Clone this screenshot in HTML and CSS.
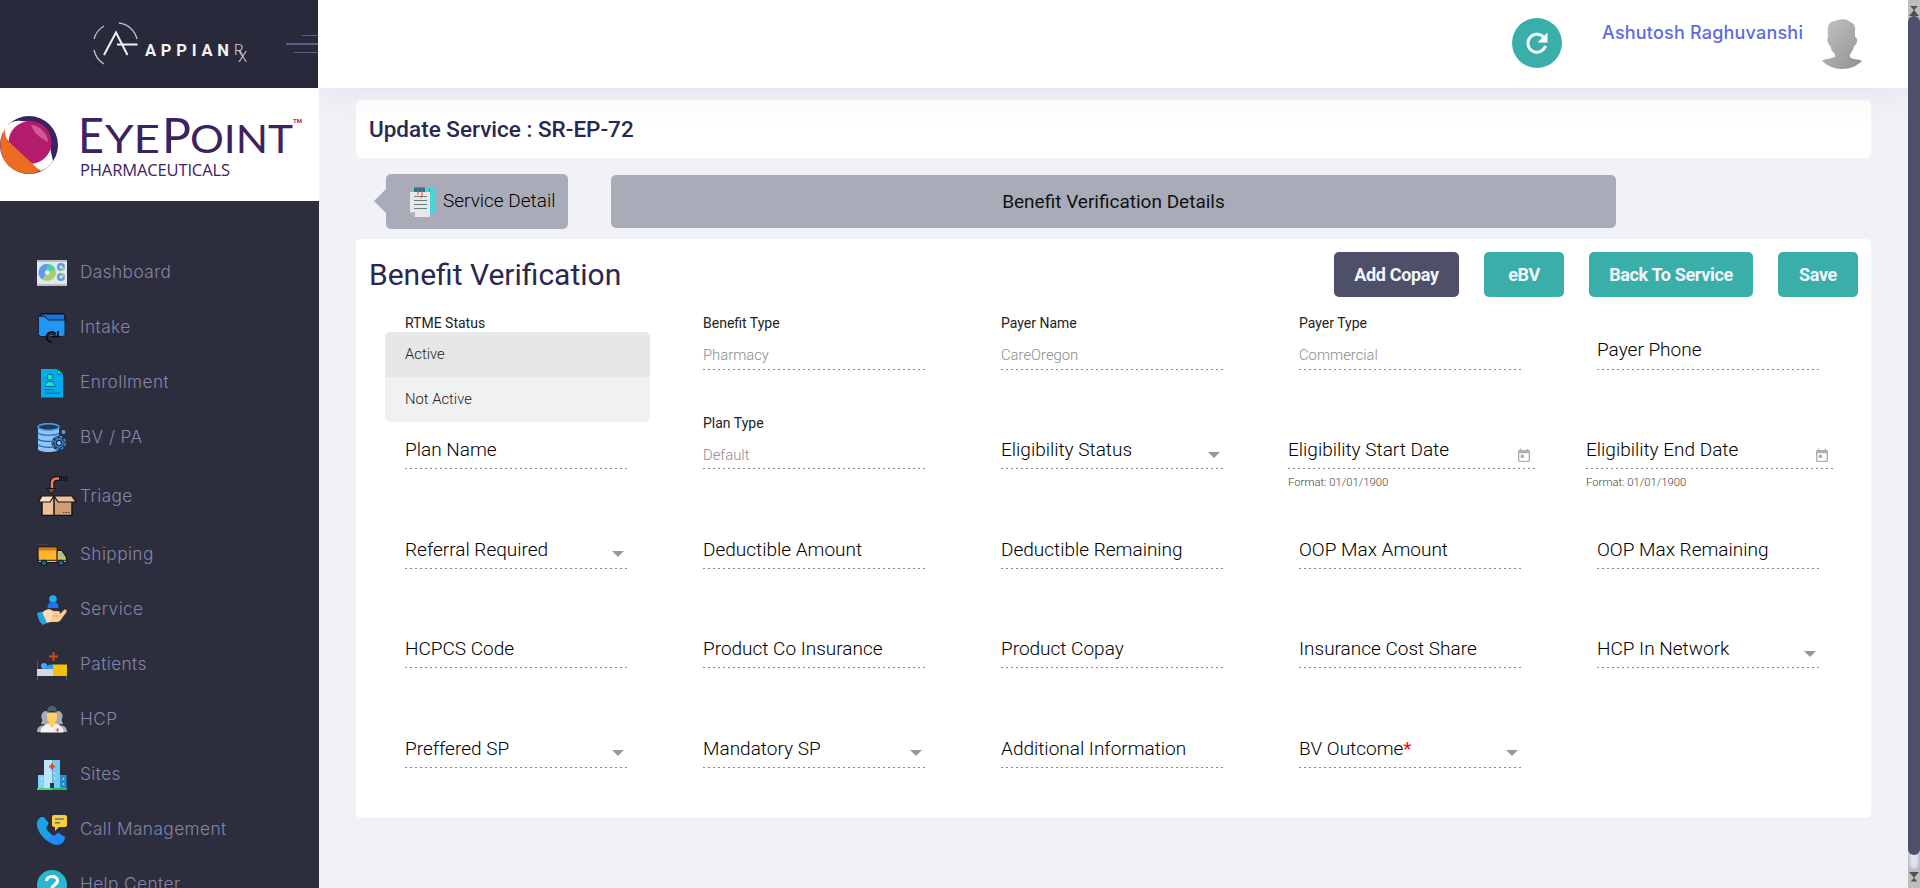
FILE: index.html
```
<!DOCTYPE html>
<html lang="en">
<head>
<meta charset="utf-8">
<title>Update Service</title>
<link rel="stylesheet" href="styles.css">
</head>
<body>
<div class="app">
  <aside class="sidebar">
    <div class="brand">
      <svg class="brand-logo" width="160" height="52" viewBox="0 0 160 52">
        <g fill="none" stroke="#f0f0f4">
          <path d="M2 19A22 22 0 0 1 12 6M27 3A21 21 0 0 1 45 19M2 30A22 22 0 0 0 12 44" stroke-width="1.3" opacity=".75"/>
          <path d="M12 35L24 12.500L35.500 35" stroke-width="2"/>
          <path d="M25 24.500H45.500" stroke-width="2"/>
        </g>
        <text x="53" y="35.500" class="appian" textLength="84">APPIAN</text>
        <text x="142" y="35" class="appian-rx">R</text>
        <text x="146" y="41.500" class="appian-rx">X</text>
      </svg>
      <span class="toggle"><i class="t1"></i><i class="t2"></i><i class="t3"></i></span>
    </div>
    <div class="client">
      <svg width="319" height="113" viewBox="0 0 319 113">
        <circle cx="29" cy="57" r="29" fill="#3e2160"/>
        <path d="M3 44C7 35 14 32 21 33C38 33 51 45 50.500 62L53 73C49 79 44 82 40 83C36 83 30 81 26 77L9 54C5 48 3 48 3 44Z" fill="#fff"/>
        <path d="M5 41C-5 58 2 78 19 84C28 87 35 86 41 82C35 80 32 78 28 74L9 56C6 51 5 46 5 41Z" fill="#ec6c23"/>
        <circle cx="30" cy="54.500" r="21.500" fill="#b31c6c"/>
        <path d="M5 50L38 81L20 84L4 72Z" fill="#ec6c23"/>
        <path d="M31 37C39 37 48 46 48 54C41 51 33 44 31 37Z" fill="#cc5b96"/>
        <g class="eyepoint">
          <text x="78" y="65" font-size="48" textLength="26" lengthAdjust="spacingAndGlyphs">E</text>
          <text x="105" y="65" font-size="39" textLength="55" lengthAdjust="spacingAndGlyphs">YE</text>
          <text x="162" y="65" font-size="48" textLength="29" lengthAdjust="spacingAndGlyphs">P</text>
          <text x="190" y="65" font-size="39" textLength="103" lengthAdjust="spacingAndGlyphs">OINT</text>
        </g>
        <text x="80" y="88" class="pharma" textLength="150">PHARMACEUTICALS</text>
        <text x="293" y="34.500" class="tm" textLength="9" lengthAdjust="spacingAndGlyphs">TM</text>
      </svg>
    </div>
    <nav class="menu">
      <a class="item"><svg width="30" height="30" viewBox="0 0 30 30"><path fill="#e4e6ee" d="M0 2h30v26H0z"/><path fill="#b9bcc8" d="M0 2h30v2H0zM0 26h30v2H0z"/><circle cx="10.500" cy="14.500" r="5.500" fill="none" stroke="#a0d468" stroke-width="6"/><path d="M10.500 9A5.500 5.500 0 0 0 7 19" fill="none" stroke="#5d9cec" stroke-width="6"/><path d="M10.500 9A5.500 5.500 0 0 1 15.500 12.500" fill="none" stroke="#48cfad" stroke-width="6"/><g fill="none" stroke-width="2.500"><circle cx="24" cy="9" r="2.800" stroke="#5d9cec"/><path d="M24 11.800A2.800 2.800 0 0 0 26.800 9" stroke="#a0d468"/><circle cx="24" cy="19" r="2.800" stroke="#5d9cec"/><path d="M24 16.200A2.800 2.800 0 0 1 26.800 19" stroke="#a0d468"/></g></svg><span>Dashboard</span></a>
      <a class="item"><svg width="30" height="30" viewBox="0 0 30 30"><path d="M4 .7h22.500l1.500 2V8H11L7 3.500H2.500z" fill="#1976d2" stroke="#0b1220" stroke-width="1.400"/><path d="M1.500 3.200H7L11.500 7H28v14.500l-2 2H3.500l-2-2z" fill="#2196f3" stroke="#14233a" stroke-width="1"/><path d="M10 27c-1-6 4-8 9-5.500" fill="none" stroke="#2c2e3e" stroke-width="3"/><path d="M15 29A5 5 0 1 1 18.500 21M15 23.500h6V18" fill="none" stroke="#0a0c14" stroke-width="1.800"/></svg><span>Intake</span></a>
      <a class="item"><svg width="30" height="30" viewBox="0 0 30 30"><path d="M4 1h17v4h5v24.500H4z" fill="#04a9ee"/><path d="M20.500 1L26 6h-5.500z" fill="#16e5c3" stroke="#046" stroke-width=".6"/><circle cx="13" cy="9" r="3" fill="#16e5c3" stroke="#046b8f"/><path d="M8 18.500c0-7 10-7 10 0z" fill="#16e5c3" stroke="#046b8f"/><path d="M7.500 21.800H17M7.500 25.200H23" stroke="#056a96"/></svg><span>Enrollment</span></a>
      <a class="item"><svg width="30" height="30" viewBox="0 0 30 30"><path d="M1 4v22c0 4 21 4 21 0V4z" fill="#90c2f8"/><ellipse cx="11.500" cy="4" rx="10.500" ry="3.300" fill="#25344f" stroke="#4a9ae2" stroke-width="1.500"/><path d="M1 10c3 3 18 3 21 0M1 16c3 3 15 3 18 1M1 22c3 2 12 3 15 2" fill="none" stroke="#1d6cae" stroke-width="1.200"/><circle cx="22" cy="20" r="7.500" fill="#23364f"/><circle cx="22" cy="20" r="6.300" fill="none" stroke="#4188cb" stroke-width="1.700" stroke-dasharray="2.900 2"/><circle cx="22" cy="20" r="4" fill="#1d2c43" stroke="#4188cb" stroke-width="1.400"/><circle cx="22" cy="20" r="2" fill="#8fc2f7"/><circle cx="26.500" cy="9" r="2" fill="#4aa2f0"/></svg><span>BV / PA</span></a>
      <a class="item item-tall"><svg width="40" height="40" viewBox="0 0 40 40"><path d="M23 2.500h-3q-5 0-5 5V13" fill="none" stroke="#141414" stroke-width="5"/><path d="M22 2.500h-2q-5 0-5 5V13" fill="none" stroke="#f27967" stroke-width="2.600"/><path d="M10 12.500h9L14.500 18z" fill="#8f3f35" stroke="#111"/><path d="M24.500 0v5M27 0v5M29.500 0v5" stroke="#141414" stroke-width="1.500"/><path d="M5 20h12v19.500H5z" fill="#ecc09b"/><path d="M17 20h18v19.500H17z" fill="#cf9f77"/><path d="M5 26v13.500h30V26M17 21v18.500" fill="none" stroke="#141414" stroke-width="1.500"/><path d="M5 19.800h12L13 26H1.500z" fill="#f7dfc9" stroke="#141414" stroke-width="1.200"/><path d="M17 19.800h18l4 6.200H21z" fill="#ecc09b" stroke="#141414" stroke-width="1.200"/><path d="M26 36.500h7" stroke="#5f4129" stroke-dasharray="1.500 1"/></svg><span>Triage</span></a>
      <a class="item"><svg width="30" height="30" viewBox="0 0 30 30"><path d="M1 7h19v15.500H1zM20 10.500h5l4.500 7v5H20z" fill="#ffb52e" stroke="#171717" stroke-width="1.200"/><path d="M2 8h17.500v2.500H2z" fill="#cf7c1c"/><path d="M22.500 12.500H25l3 4.500h-6z" fill="#75c8de"/><path d="M1 20.300h29" stroke="#222"/><circle cx="7" cy="23" r="2.700" fill="#1c6693" stroke="#122" stroke-width="1.200"/><circle cx="24" cy="23" r="2.700" fill="#1c6693" stroke="#122" stroke-width="1.200"/><path d="M0 4.500h10" stroke="#474747"/></svg><span>Shipping</span></a>
      <a class="item"><svg width="30" height="30" viewBox="0 0 30 30"><circle cx="16" cy="4" r="3.800" fill="#1eb0eb"/><path d="M10.500 13c0-4 2-6 5.500-6s5.500 2 5.500 6z" fill="#1478f5"/><path d="M5 18c4-5 9-4.500 11-2h5c2 0 3 3 1 4l5-5c2-1 3 0 2.500 2L23 26c-3 2-9 0-14 2z" fill="#fbc98e"/><path d="M5 18c4-4 7-4 9-3l2 5-4 7-3 1z" fill="#fddcb0"/><path d="M16 21h6" stroke="#e0a368"/><path d="M0 18l5-1.500L10 28l-4 2C3 28 1 23 0 18z" fill="#21a5dc"/></svg><span>Service</span></a>
      <a class="item"><svg width="30" height="30" viewBox="0 0 30 30"><path d="M.5 11v19M29.500 26v4" stroke="#555b62"/><path d="M0 19h16v7H0z" fill="#d8d6df"/><path d="M16 14.500h14V26H16z" fill="#f0c306"/><circle cx="7" cy="16" r="3" fill="#45a7f5"/><path d="M9 19c0-4 3-4.500 7-4.500V19z" fill="#3795ea"/><path d="M16.500 2v9M12 6.500h9" stroke="#d5460c" stroke-width="2"/></svg><span>Patients</span></a>
      <a class="item"><svg width="30" height="30" viewBox="0 0 30 30"><path d="M10 6C5 5 3 11 5.500 15L4 19l8 1zM20 6c5-1 7 5 4.500 9l1.500 4-8 1zM0 27c0-5 3-6 6-7l-2 7zM30 27c0-5-3-6-6-7l2 7z" fill="#a6adb3"/><path d="M3.500 27.500c0-7 6-9.500 11.500-9.500s11.500 2.500 11.500 9.500z" fill="#f4f2f3"/><path d="M10 7.500h10V13c0 3-2 4-2.500 7L15 23l-2.500-3c-.5-3-2.500-4-2.500-7z" fill="#fbcf63"/><path d="M10.500 7V4.500c1-5 8-5 9 0V7c-3-1.500-6-1.500-9 0z" fill="#47616f"/><path d="M20.500 23v4M18.500 25h4" stroke="#ef554a" stroke-width="1.200"/></svg><span>HCP</span></a>
      <a class="item"><svg width="30" height="30" viewBox="0 0 30 30"><path d="M1 15h7v13H1z" fill="#7dd0f8"/><path d="M7 0h8.500v28H7z" fill="#bce5fb"/><path d="M15.500 0H23v28h-7.500z" fill="#75c9f5"/><path d="M23 15h6.500v13H23z" fill="#2490d0"/><path d="M0 28h15v2H0z" fill="#55d36b"/><path d="M15 28h15v2H15z" fill="#2cb765"/><path d="M15 3.500v6M12 6.500h6" stroke="#e2451d" stroke-width="2.200"/><path d="M4.500 18v8M26.500 18v8M12.500 12v8M17.500 12v8" stroke="#e6f7ff" stroke-width="1.200" stroke-dasharray="2 3" opacity=".7"/><path d="M13 23h4v5h-4z" fill="#133c5a"/></svg><span>Sites</span></a>
      <a class="item"><svg width="30" height="30" viewBox="0 0 30 30"><path d="M0 10C0 5 3 1.500 6.500 2L11.500 8l-2.500 5c2 4 5 6 8 8l4-3.500 7 4.500C28 27 24 30 19 30 10 28 1 19 0 10z" fill="#1e8bfb"/><path d="M0 10C0 5 3 1.500 6.500 2L11.500 8 9 13c1 3 3 5 5 6.500L10 25C4 20 1 15 0 10z" fill="#1ba3e4"/><path d="M17 0h11q2 0 2 2v8q0 2-2 2h-6l-4 4v-4q-3 0-3-2V2q0-2 2-2z" fill="#ffcd35"/><path d="M18 4h9M18 7.800h5" stroke="#43808d" stroke-width="1.400"/></svg><span>Call Management</span></a>
      <a class="item"><svg width="30" height="30" viewBox="0 0 30 30"><circle cx="15" cy="15" r="15" fill="#28b7d3"/><path d="M9.500 11c0-6 11-6 11-.2 0 4.200-5.500 4-5.500 8" fill="none" stroke="#fff" stroke-width="3.200"/><circle cx="15" cy="23.500" r="2" fill="#fff"/></svg><span>Help Center</span></a>
    </nav>
  </aside>

  <div class="main">
    <header class="topbar">
      <span class="refresh"><svg width="28" height="28" viewBox="0 0 24 24"><path d="M19.300 14.500A7.700 7.700 0 1 1 17.500 6.800" fill="none" stroke="#fff" stroke-width="2.500"/><path d="M21 3v8.500h-8.500z" fill="#fff"/></svg></span>
      <span class="user">Ashutosh Raghuvanshi</span>
      <svg class="avatar" width="40" height="50" viewBox="0 0 40 50"><defs><linearGradient id="av" x1="0" y1="0" x2="1" y2="1"><stop offset="0" stop-color="#c4c4c4"/><stop offset="1" stop-color="#8e9093"/></linearGradient></defs><path fill="url(#av)" d="M6 18C5 10 6 5 9 3c2-1 5-1 7-2 4-1 8-1 11 1l1 1c4 1 6 5 5 9v6c3 0 3 7-1 9-1 4-2 6-4 8v3c3 3 8 1.500 12 4C35 47 28 50 20 50S5 47 0 41.500c4-2 9-1.500 13-3.500v-3c-3-2-4-5-4.500-8-3-1-4-8-2.500-9z"/></svg>
    </header>

    <div class="content">
      <section class="card page-title">Update Service : SR-EP-72</section>

      <div class="tabs">
        <div class="tab tab-service">
          <svg width="28" height="30" viewBox="0 0 28 30"><path d="M5 1h21v26H5z" fill="#4bd3dc"/><path d="M20 1h1v26h-1z" fill="#20aebd"/><path d="M5 .500h11V7H5z" fill="#147c93"/><path d="M1 5h20v25H6l-5-5z" fill="#e5eae9"/><path d="M1 25h5v5z" fill="#a9bdbb"/><path d="M5 9.500h13M5 13.500h13M5 17.500h13M5 21.500h13" stroke="#6d7d7c" stroke-width="1.100"/><path d="M9 8V1.500q0-1.500 1.500-1.500T13 1.500V9q0 2-1.500 2" fill="none" stroke="#e8474b"/></svg>
          <span>Service Detail</span>
        </div>
        <div class="tab tab-bv">Benefit Verification Details</div>
      </div>

      <section class="card panel">
        <div class="panel-head">
          <h2>Benefit Verification</h2>
          <div class="actions">
            <button class="btn btn-dark">Add Copay</button>
            <button class="btn">eBV</button>
            <button class="btn btn-wide">Back To Service</button>
            <button class="btn">Save</button>
          </div>
        </div>
        <div class="fields">
          <div class="field first-row"><small>RTME Status</small><em>&nbsp;</em>
            <div class="options"><div class="option selected">Active</div><div class="option">Not Active</div></div>
          </div>
          <div class="field first-row"><small>Benefit Type</small><em>Pharmacy</em></div>
          <div class="field first-row"><small>Payer Name</small><em>CareOregon</em></div>
          <div class="field first-row"><small>Payer Type</small><em>Commercial</em></div>
          <div class="field first-row"><label>Payer Phone</label></div>

          <div class="field"><label>Plan Name</label></div>
          <div class="field"><small>Plan Type</small><em>Default</em></div>
          <div class="field select"><label>Eligibility Status</label></div>
          <div class="field date"><label>Eligibility Start Date</label><svg class="cal" width="16" height="16" viewBox="0 0 24 24"><path d="M19 3h-1V1h-2v2H8V1H6v2H5c-1.110 0-1.990.9-1.990 2L3 19c0 1.100.89 2 2 2h14c1.100 0 2-.9 2-2V5c0-1.100-.9-2-2-2zm0 16H5V8h14v11zM7 10h5v5H7z"/></svg><span class="hint">Format: 01/01/1900</span></div>
          <div class="field date"><label>Eligibility End Date</label><svg class="cal" width="16" height="16" viewBox="0 0 24 24"><path d="M19 3h-1V1h-2v2H8V1H6v2H5c-1.110 0-1.990.9-1.990 2L3 19c0 1.100.89 2 2 2h14c1.100 0 2-.9 2-2V5c0-1.100-.9-2-2-2zm0 16H5V8h14v11zM7 10h5v5H7z"/></svg><span class="hint">Format: 01/01/1900</span></div>

          <div class="field select raised"><label>Referral Required</label></div>
          <div class="field"><label>Deductible Amount</label></div>
          <div class="field"><label>Deductible Remaining</label></div>
          <div class="field"><label>OOP Max Amount</label></div>
          <div class="field"><label>OOP Max Remaining</label></div>

          <div class="field"><label>HCPCS Code</label></div>
          <div class="field"><label>Product Co Insurance</label></div>
          <div class="field"><label>Product Copay</label></div>
          <div class="field"><label>Insurance Cost Share</label></div>
          <div class="field select"><label>HCP In Network</label></div>

          <div class="field select raised"><label>Preffered SP</label></div>
          <div class="field select raised"><label>Mandatory SP</label></div>
          <div class="field"><label>Additional Information</label></div>
          <div class="field select raised"><label>BV Outcome<b>*</b></label></div>
        </div>
      </section>
    </div>
  </div>

  <div class="scrollbar">
    <svg width="12" height="16" viewBox="0 0 12 16"><path fill="#505050" d="M2 6h8L6.500 9.500v1L11 16H1l4.500-5.500v-1z"/></svg>
    <div class="track"><div class="thumb"></div></div>
    <svg width="12" height="17" viewBox="0 0 12 17"><path fill="#505050" d="M1 1h10L6.500 6v1.500L9.500 10.500h-7L5.500 7.500V6z"/></svg>
  </div>
</div>
</body>
</html>
```
FILE: styles.css
```
* { box-sizing: border-box; }
body { margin: 0; font-family: Roboto, sans-serif; background: #f1f2f8; }
.app { display: flex; width: 100%; height: 888px; overflow: hidden; }

/* sidebar */
.sidebar { width: 319px; flex: none; height: 888px; overflow: hidden; background: #2c2e3e; }
.brand { width: 318px; height: 88px; display: flex; align-items: center; justify-content: space-between; padding-left: 92px; background: #282a3c; }
.brand-logo { margin-top: 4px; }
.appian { font: 700 16.5px Roboto, sans-serif; fill: #f4f4f7; }
.appian-rx { font: 300 15px Roboto, sans-serif; fill: #d5d5dc; }
.toggle { width: 32px; display: flex; flex-direction: column; align-items: flex-end; gap: 7px; }
.toggle i { height: 1px; background: #5c5e81; }
.toggle .t1 { width: 16px; }
.toggle .t2 { width: 32px; height: 2px; }
.toggle .t3 { width: 24px; }
.client { height: 113px; background: #fff; }
.client svg { display: block; }
.eyepoint { font-family: Lato, sans-serif; fill: #3e2160; }
.pharma { font: 400 16.5px "Open Sans", sans-serif; fill: #3e2160; }
.tm { font: 700 6px Roboto, sans-serif; fill: #b31c6c; }
.menu { padding: 44px 0 0 37px; }
.item { display: flex; align-items: center; height: 55px; color: #8485a8; font: 300 17.3px/24px Inter, sans-serif; letter-spacing: .4px; }
.item svg { flex: none; display: block; }
.item span { margin-left: 13px; margin-top: -2px; }
.item-tall { height: 62px; }
.item-tall span { margin-left: 3px; margin-top: 0; }

/* header */
.main { flex: 1; min-width: 0; }
.topbar { height: 88px; margin-left: -1px; padding: 18px 46px 0 0; display: flex; justify-content: flex-end; align-items: flex-start; background: #fff; box-shadow: 0 0 40px rgba(82, 63, 105, .1); clip-path: inset(0 0 -60px 0); position: relative; z-index: 1; }
.refresh { width: 50px; height: 50px; border-radius: 50%; background: #3aafa9; display: flex; align-items: center; justify-content: center; }
.user { width: 201px; margin-left: 40px; font: 500 18px/30px Inter, sans-serif; letter-spacing: .2px; color: #5d6ae0; white-space: nowrap; }
.avatar { margin: 1px 0 0 19px; }

/* content */
.content { padding: 12px 37px 0; }
.card { background: #fff; border-radius: 5px; }
.page-title { height: 58px; padding-left: 13px; font-size: 22.500px; font-weight: 500; line-height: 59px; color: #2b2850; }
.tabs { display: flex; align-items: center; height: 81px; padding: 7px 0 2px 30px; gap: 43px; }
.tab { background: #a9abb8; border-radius: 5px; color: #111; }
.tab-service { position: relative; width: 182px; height: 55px; display: flex; align-items: center; padding-left: 23px; gap: 6px; font-size: 19px; font-weight: 300; white-space: nowrap; color: #000; }
.tab-service svg { margin-top: 2px; }
.tab-service span { margin-top: -2px; }
.tab-service::before { content: ""; position: absolute; left: -12px; top: 15px; border: solid transparent; border-width: 12.5px 12px 12.5px 0; border-right-color: #a9abb8; }
.tab-bv { width: 1005px; height: 53px; font-size: 19px; font-weight: 400; line-height: 54px; text-align: center; }

.panel { height: 579px; }
.panel-head { display: flex; justify-content: space-between; height: 59px; padding: 13px 13px 0; }
.panel-head h2 { margin: 0; font-size: 30px; font-weight: 400; line-height: 46px; color: #2b2850; }
.actions { display: flex; gap: 25px; }
.btn { min-width: 80px; height: 45px; padding: 0; border: 0; border-radius: 5px; background: #3aafa9; color: #f2f5fc; font: 700 18px Roboto, sans-serif; letter-spacing: -.35px; }
.btn-dark { width: 125px; background: #4e4f69; }
.btn-wide { width: 164px; }

.fields { display: grid; grid-template-columns: repeat(5, 298px); grid-template-rows: 99px 100px 99px 100px 99px; padding-left: 29px; }
.field { position: relative; width: 222px; height: 72px; margin-left: 20px; padding-bottom: 7px; display: flex; flex-direction: column; justify-content: flex-end; background: repeating-linear-gradient(90deg, #8a8a8a 0 2px, transparent 2px 5px) bottom / 100% 1px no-repeat; }
.first-row { padding-bottom: 8px; }
.field label { font-size: 19px; font-weight: 300; line-height: 24px; color: #000; }
.field label b { color: #f00; font-weight: 400; }
.field small { font-size: 14px; line-height: 20px; color: #222; }
.field em { margin: 12px 0 -3px; font-style: normal; font-weight: 300; font-size: 14.800px; line-height: 20px; color: #8c8c8c; }
.select::after { content: ""; position: absolute; right: 3px; bottom: 11px; border: solid transparent; border-width: 6px 6px 0; border-top-color: #999; }
.raised::after { bottom: 12px; }
.date { width: 248px; margin-left: 9px; }
.cal { position: absolute; right: 4px; bottom: 5px; fill: #b0b0b0; }
.hint { position: absolute; left: 0; top: 79px; font-size: 11.300px; font-weight: 300; line-height: 14px; color: #444; }
.options { position: absolute; left: -20px; top: 34px; width: 265px; border-radius: 5px; overflow: hidden; background: #f1f1f1; z-index: 2; }
.option { height: 45px; padding-left: 20px; font-size: 14.800px; font-weight: 300; line-height: 45px; color: #222; }
.option.selected { background: #e7e7e7; }

/* scrollbar */
.scrollbar { width: 12px; flex: none; height: 888px; display: flex; flex-direction: column; background: #bdbdbd; position: relative; z-index: 2; }
.scrollbar svg { flex: none; display: block; }
.track { flex: 1; border-radius: 6px; background: #e6e6ee; box-shadow: inset 0 0 5px #8888a0; }
.thumb { height: 839px; border-radius: 6px; background: #4e4f69; }
```
